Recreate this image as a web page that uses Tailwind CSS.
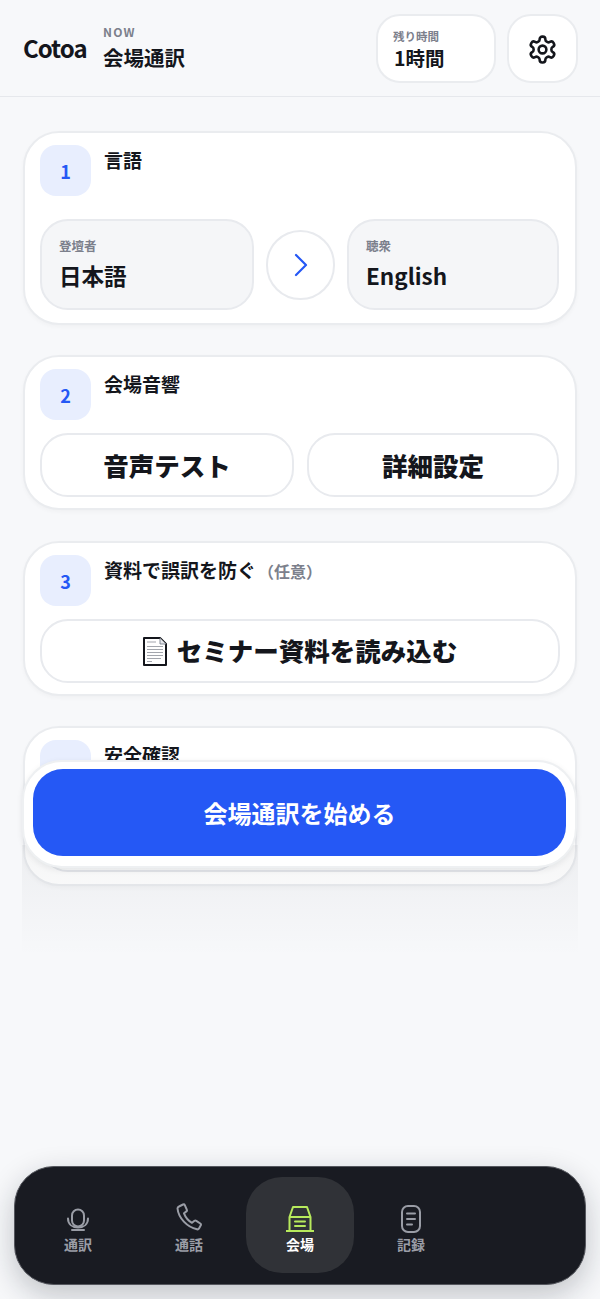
<!DOCTYPE html>
<html lang="ja">
<head>
<meta charset="utf-8">
<script src="https://cdn.jsdelivr.net/npm/@tailwindcss/browser@4"></script>
</head>
<body class="m-0 bg-[#f7f8fa]">
<div class="relative w-[600px] h-[1299px] overflow-hidden bg-[#f7f8fa] text-[#14161c] font-['Noto_Sans_CJK_JP','Noto_Sans',sans-serif]">
  <header class="h-[97px] border-b border-[#e6e8ec] flex items-center pl-[23px] pr-[22px]">
    <div class="text-[24px] leading-none font-semibold tracking-[-1px] w-[80px]">Cotoa</div>
    <div class="flex flex-col">
      <div class="text-[12px] leading-[14px] font-bold tracking-[1.2px] text-[#7c808c] mt-px">NOW</div>
      <div class="text-[20.500px] leading-[30px] font-semibold mt-[3px]">会場通訳</div>
    </div>
    <div class="ml-auto w-[120px] h-[69px] rounded-[24px] bg-white border-2 border-[#eaecef] pl-[15px] pt-[3px] flex flex-col justify-center">
      <div class="text-[11.500px] leading-[16px] font-semibold text-[#7c808c]">残り時間</div>
      <div class="text-[19.500px] leading-[28px] font-semibold ml-px">1時間</div>
    </div>
    <div class="ml-[11px] w-[71px] h-[69px] rounded-[24px] bg-white border-2 border-[#eaecef] flex items-center justify-center pt-[3px]">
      <svg width="31" height="31" viewBox="0 0 24 24" fill="none" stroke="#14161c" stroke-width="2" stroke-linecap="round" stroke-linejoin="round"><path d="M12.220 2h-.44a2 2 0 0 0-2 2v.18a2 2 0 0 1-1 1.730l-.43.25a2 2 0 0 1-2 0l-.15-.08a2 2 0 0 0-2.730.73l-.22.38a2 2 0 0 0 .73 2.730l.15.1a2 2 0 0 1 1 1.720v.51a2 2 0 0 1-1 1.740l-.15.09a2 2 0 0 0-.73 2.730l.22.38a2 2 0 0 0 2.730.73l.15-.08a2 2 0 0 1 2 0l.43.25a2 2 0 0 1 1 1.730V20a2 2 0 0 0 2 2h.44a2 2 0 0 0 2-2v-.18a2 2 0 0 1 1-1.730l.43-.25a2 2 0 0 1 2 0l.15.08a2 2 0 0 0 2.730-.73l.22-.39a2 2 0 0 0-.73-2.730l-.15-.08a2 2 0 0 1-1-1.740v-.5a2 2 0 0 1 1-1.740l.15-.09a2 2 0 0 0 .73-2.730l-.22-.38a2 2 0 0 0-2.730-.73l-.15.08a2 2 0 0 1-2 0l-.43-.25a2 2 0 0 1-1-1.730V4a2 2 0 0 0-2-2z"/><circle cx="12" cy="12" r="3"/></svg>
    </div>
  </header>

  <main class="pt-[34px] px-[23px] flex flex-col gap-[30.500px]">
    <section class="h-[193.500px] rounded-[36px] bg-white border-2 border-[#eaecef] shadow-[0_2px_4px_rgba(17,24,39,0.03)] px-[15px] pt-[12px]">
      <div class="flex gap-[13px]">
        <div class="w-[51px] h-[51px] rounded-[16px] bg-[#e8eefe] text-[#2558f5] text-[18px] font-bold flex items-center justify-center pt-[2px]">1</div>
        <div class="text-[19px] leading-[28px] font-semibold pt-px">言語</div>
      </div>
      <div class="mt-[23px] flex items-center gap-[12px]">
        <div class="w-[214px] h-[91px] rounded-[28px] bg-[#f5f6f8] border-2 border-[#e8eaee] pl-[17px] flex flex-col justify-center">
          <div class="text-[12.500px] leading-[18px] font-semibold text-[#7c808c] -mt-[1px]">登壇者</div>
          <div class="text-[22.500px] leading-[34px] font-semibold mt-[3px]">日本語</div>
        </div>
        <div class="w-[69px] h-[70px] rounded-full bg-white border-2 border-[#e8eaee] flex items-center justify-center">
          <svg width="26" height="26" viewBox="0 0 26 26" fill="none" stroke="#2558f5" stroke-width="2.200" stroke-linecap="round" stroke-linejoin="round"><path d="M8 3 18 13 8 23" /></svg>
        </div>
        <div class="w-[212px] h-[91px] rounded-[28px] bg-[#f5f6f8] border-2 border-[#e8eaee] pl-[17px] flex flex-col justify-center">
          <div class="text-[12.500px] leading-[18px] font-semibold text-[#7c808c] -mt-[1px]">聴衆</div>
          <div class="text-[22.500px] leading-[34px] font-semibold mt-[3px]">English</div>
        </div>
      </div>
    </section>

    <section class="h-[155px] rounded-[36px] bg-white border-2 border-[#eaecef] shadow-[0_2px_4px_rgba(17,24,39,0.03)] px-[15px] pt-[12px]">
      <div class="flex gap-[13px]">
        <div class="w-[51px] h-[51px] rounded-[16px] bg-[#e8eefe] text-[#2558f5] text-[18px] font-bold flex items-center justify-center pt-[2px]">2</div>
        <div class="text-[19px] leading-[28px] font-semibold pt-px">会場音響</div>
      </div>
      <div class="mt-[13px] flex gap-[13px]">
        <div class="w-[254px] h-[64px] rounded-[28px] bg-white border-2 border-[#e8eaee] flex items-center justify-center text-[25.500px] font-black">音声テスト</div>
        <div class="w-[252px] h-[64px] rounded-[28px] bg-white border-2 border-[#e8eaee] flex items-center justify-center text-[25.500px] font-black">詳細設定</div>
      </div>
    </section>

    <section class="h-[155px] rounded-[36px] bg-white border-2 border-[#eaecef] shadow-[0_2px_4px_rgba(17,24,39,0.03)] px-[15px] pt-[12px]">
      <div class="flex gap-[13px]">
        <div class="w-[51px] h-[51px] rounded-[16px] bg-[#e8eefe] text-[#2558f5] text-[18px] font-bold flex items-center justify-center pt-[2px]">3</div>
        <div class="text-[19px] leading-[28px] font-semibold pt-px">資料で誤訳を防ぐ<span class="text-[16px] text-[#7c808c] ml-[2px]">（任意）</span></div>
      </div>
      <div class="mt-[13px] h-[64px] rounded-[28px] bg-white border-2 border-[#e8eaee] flex items-center justify-center gap-[10px] text-[25.500px] font-black">
        <svg width="24" height="29" viewBox="0 0 24 29" fill="none" class="mt-[2px]"><path d="M1 1H17L23 7V28H1Z" fill="#fff" stroke="#14161c" stroke-width="2" stroke-linejoin="round"/><path d="M17 1V7H23" stroke="#6b7280" stroke-width="0.800" fill="#e5e7eb"/><path d="M4 5h9M4 9.500h16M4 12.500h16M4 15.500h16M4 18.500h16M4 21.500h14M4 24.500h5" stroke="#a3a6ad" stroke-width="1.100"/></svg>
        <span>セミナー資料を読み込む</span>
      </div>
    </section>

    <section class="h-[160px] rounded-[36px] bg-white border-2 border-[#eaecef] shadow-[0_2px_4px_rgba(17,24,39,0.03)] px-[15px] pt-[12px]">
      <div class="flex gap-[13px]">
        <div class="w-[51px] h-[51px] rounded-[16px] bg-[#e8eefe]"></div>
        <div class="text-[19px] leading-[28px] font-semibold pt-px">安全確認</div>
      </div>
      <div class="mt-[17px] h-[64px] rounded-[28px] bg-white border-2 border-[#e8eaee]"></div>
    </section>
  </main>

  <div class="absolute left-[22px] top-[845px] w-[556px] h-[112px] bg-gradient-to-b from-[#1118270b] to-[#11182700]"></div>

  <div class="absolute left-[22px] top-[760px] w-[555px] h-[108px] rounded-[40px] bg-white border-2 border-[#eef0f2] shadow-[0_2px_6px_rgba(17,24,39,0.08)] flex items-center justify-center">
    <div class="w-[533px] h-[87px] rounded-[30px] bg-[#2558f5] text-white text-[24px] font-bold flex items-center justify-center -mt-[3px]">会場通訳を始める</div>
  </div>

  <nav class="absolute left-[14px] top-[1166px] w-[572px] h-[119px] rounded-[40px] bg-[#191b22] border border-[#55575e] shadow-[0_10px_30px_rgba(17,24,39,0.24)] pl-[9px] pt-[10px] grid grid-cols-[108px_108px_108px_108px_108px] gap-[3px] content-start">
    <div class="h-[96px] flex flex-col items-center justify-center pt-[8px] text-[#9a9da6]">
      <svg width="28" height="28" viewBox="0 0 28 28" fill="none" stroke="#9a9da6" stroke-width="2" stroke-linecap="round" stroke-linejoin="round"><rect x="8" y="4.500" width="12" height="17" rx="6"/><path d="M4 13.500c0 5.500 4 9 10 9s10-3.500 10-9M8 25h12"/></svg>
      <div class="text-[14px] leading-[20px] font-semibold mt-[1px]">通訳</div>
    </div>
    <div class="h-[96px] flex flex-col items-center justify-center pt-[8px] text-[#9a9da6]">
      <svg width="28" height="28" viewBox="0 0 28 28" fill="none" stroke="#9a9da6" stroke-width="2" stroke-linecap="round" stroke-linejoin="round" class="-mt-[2px] mb-[2px] -ml-[1px]"><path d="M4 3.500 8 1.500c.8-.3 1.500 0 1.800.7l2 4.500c.3.600.1 1.300-.4 1.700L9 10.300c1.500 4 4.500 7.500 8 9.500l2.500-2c.5-.4 1.200-.4 1.800 0l4 2.700c.6.400.8 1.100.5 1.800l-1.800 3.200c-.4.700-1.200 1-2 .8C12 24 3.500 15 2.500 5.500c0-.8.600-1.600 1.500-2Z"/></svg>
      <div class="text-[14px] leading-[20px] font-semibold mt-[1px]">通話</div>
    </div>
    <div class="h-[96px] rounded-[36px] bg-[#303237] flex flex-col items-center justify-center pt-[8px] text-white">
      <svg width="28" height="28" viewBox="0 0 28 28" fill="none" stroke="#b7ea5c" stroke-width="2" stroke-linecap="round" stroke-linejoin="round"><path d="M3.500 12 7 2h14l3.500 10ZM3.500 12V26M24.500 12V26M.5 26h27M9 16.500h10M9 21h10"/></svg>
      <div class="text-[14px] leading-[20px] font-bold mt-[1px]">会場</div>
    </div>
    <div class="h-[96px] flex flex-col items-center justify-center pt-[8px] text-[#9a9da6]">
      <svg width="28" height="28" viewBox="0 0 28 28" fill="none" stroke="#9a9da6" stroke-width="2" stroke-linecap="round" stroke-linejoin="round"><rect x="5" y="1" width="18" height="26" rx="6"/><path d="M10 8.500h8M10 14h8M10 19.500h5"/></svg>
      <div class="text-[14px] leading-[20px] font-semibold mt-[1px]">記録</div>
    </div>
  </nav>
</div>
</body>
</html>
